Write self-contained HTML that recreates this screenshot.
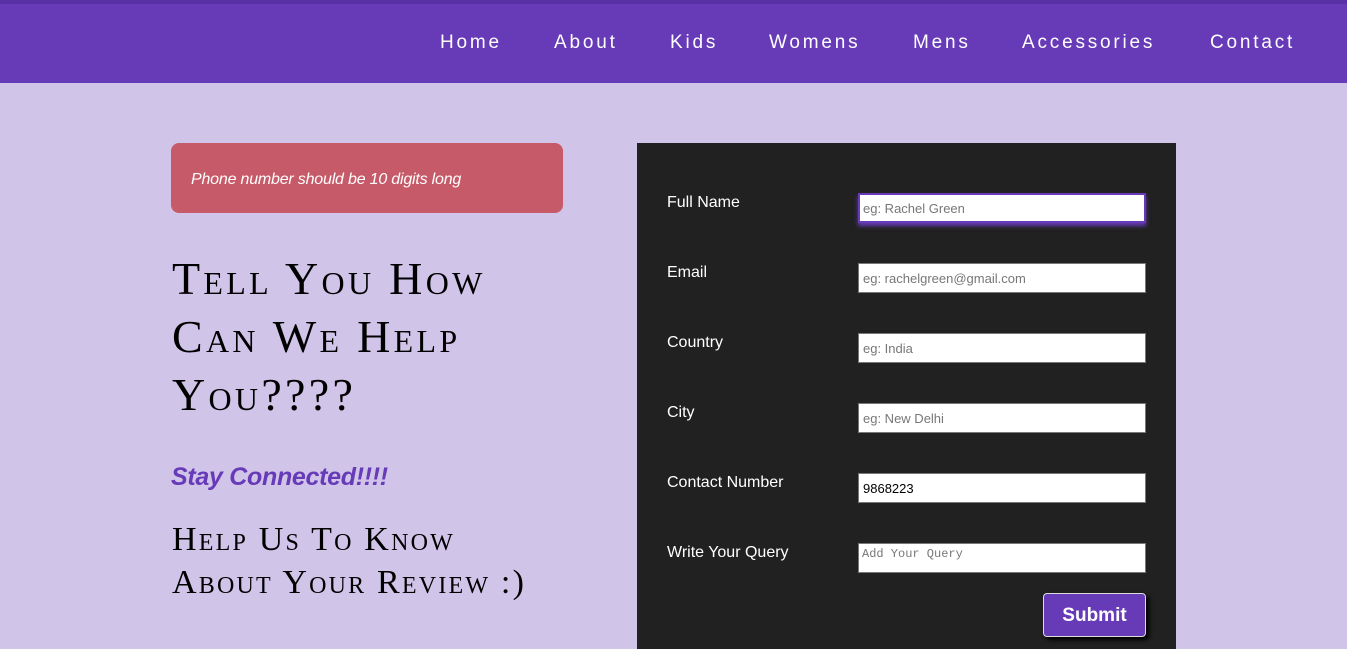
<!DOCTYPE html>
<html><head><style>
*{margin:0;padding:0;box-sizing:border-box}
body{width:1347px;height:649px;overflow:hidden;background:#d1c4e9;font-family:"Liberation Sans",sans-serif;position:relative}
.nav{position:absolute;left:0;top:0;width:1347px;height:83px;background:#673ab7;border-top:4px solid #5930a6}
.nav a{position:absolute;top:28px;color:#fff;font-size:19px;letter-spacing:2.8px;text-decoration:none}
.alert{position:absolute;left:171px;top:143px;width:392px;height:70px;background:#c75a68;border-radius:8px;color:#fff;font-style:italic;font-size:16px;padding:28px 0 0 20px;letter-spacing:-0.2px}
.h1{position:absolute;left:172px;top:250px;font-family:"Liberation Serif",serif;font-variant:small-caps;font-size:46px;line-height:58px;color:#000;letter-spacing:3.3px}
.stay{position:absolute;left:171px;top:463px;font-weight:bold;font-style:italic;font-size:25px;color:#673ab7;letter-spacing:-0.3px}
.h2{position:absolute;left:172px;top:518px;font-family:"Liberation Serif",serif;font-variant:small-caps;font-size:34px;line-height:43px;color:#000;letter-spacing:2.2px}
.panel{position:absolute;left:637px;top:143px;width:539px;height:506px;background:#212121}
.lbl{position:absolute;left:667px;color:#fff;font-size:16px}
.inp{position:absolute;left:858px;width:288px;height:30px;background:#fff;border:1px solid #777;font-size:13px;color:#777;padding:7px 4px}
.btn{position:absolute;left:1043px;top:593px;width:103px;height:44px;background:#673ab7;border:1px solid #ddd;border-radius:4px;color:#fff;font-weight:bold;font-size:19px;text-align:center;line-height:44px;box-shadow:3px 3px 5px #000}
</style></head><body>
<div class="nav">
<a style="left:440px">Home</a><a style="left:554px">About</a><a style="left:670px">Kids</a><a style="left:769px">Womens</a><a style="left:913px">Mens</a><a style="left:1022px">Accessories</a><a style="left:1210px">Contact</a>
</div>
<div class="alert">Phone number should be 10 digits long</div>
<div class="h1">Tell You How<br>Can We Help<br>You????</div>
<div class="stay">Stay Connected!!!!</div>
<div class="h2">Help Us To Know<br>About Your Review :)</div>
<div class="panel"></div>
<div class="lbl" style="top:194px">Full Name</div>
<div class="lbl" style="top:264px">Email</div>
<div class="lbl" style="top:334px">Country</div>
<div class="lbl" style="top:404px">City</div>
<div class="lbl" style="top:474px">Contact Number</div>
<div class="lbl" style="top:544px">Write Your Query</div>
<div class="inp" style="top:193px;border:2px solid #673ab7;box-shadow:0 3px 4px #673ab7;padding:6px 3px">eg: Rachel Green</div>
<div class="inp" style="top:263px">eg: rachelgreen@gmail.com</div>
<div class="inp" style="top:333px">eg: India</div>
<div class="inp" style="top:403px">eg: New Delhi</div>
<div class="inp" style="top:473px;color:#000">9868223</div>
<div class="inp" style="top:543px;font-family:'Liberation Mono',monospace;font-size:12px;padding:3px 3px">Add Your Query</div>
<div class="btn">Submit</div>
</body></html>
